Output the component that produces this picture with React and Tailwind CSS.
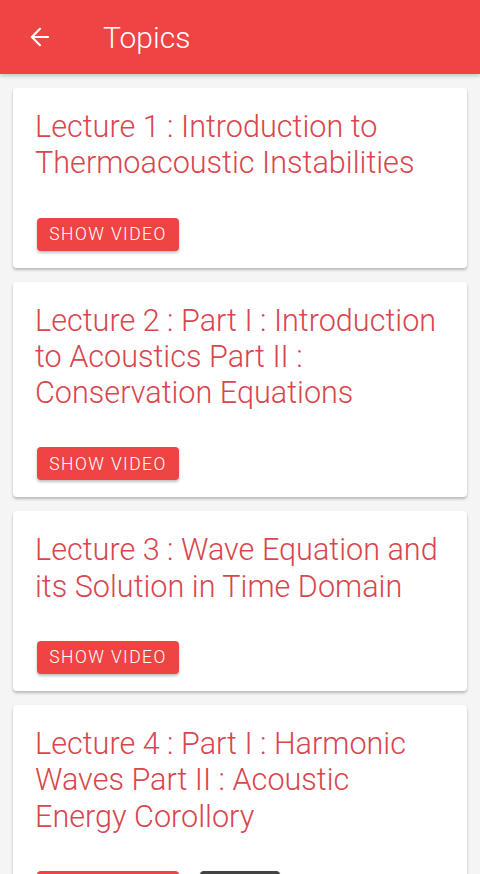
import { ArrowLeft } from "lucide-react";

const lectures = [
  { title: "Lecture 1 : Introduction to Thermoacoustic Instabilities" },
  { title: "Lecture 2 : Part I : Introduction to Acoustics Part II : Conservation Equations" },
  { title: "Lecture 3 : Wave Equation and its Solution in Time Domain" },
  { title: "Lecture 4 : Part I : Harmonic Waves Part II : Acoustic Energy Corollory", pdf: true },
];

const LectureCard = ({ title, pdf }) => (
  <div className="bg-white rounded-[4px] shadow-[0_2px_3px_rgba(0,0,0,0.25)] pl-[22px] pr-[24px] pt-[21px] pb-[17px]">
    <h2 className="text-[30.6px] leading-[36.3px] font-light text-[#d9464e]">{title}</h2>
    <div className="mt-[36px] ml-[2px] flex gap-[21px]">
      <button className="h-[33px] w-[142px] rounded-[4px] bg-[#ef4444] text-white text-[17.5px] font-light tracking-[0.08em] shadow-[0_2px_3px_rgba(0,0,0,0.25)]">
        SHOW VIDEO
      </button>
      {pdf && (
        <button className="h-[33px] w-[80px] rounded-[4px] bg-[#424242] text-white text-[17.5px] font-light tracking-[0.08em] shadow-[0_2px_3px_rgba(0,0,0,0.25)]">
          PDF
        </button>
      )}
    </div>
  </div>
);

const App = () => {
  return (
    <div className="min-h-screen bg-[#f5f5f5] font-['Roboto',sans-serif]">
      <header className="h-[74px] bg-[#ef4444] flex items-center shadow-[0_2px_4px_rgba(0,0,0,0.2)]">
        <ArrowLeft className="ml-[26px] text-white" size={28} strokeWidth={1.8} />
        <h1 className="ml-[49px] text-white text-[30px] font-light">Topics</h1>
      </header>
      <main className="px-[13px] pt-[14px] flex flex-col gap-[14px]">
        {lectures.map((l) => (
          <LectureCard key={l.title} title={l.title} pdf={l.pdf} />
        ))}
      </main>
    </div>
  );
};

export default App;
